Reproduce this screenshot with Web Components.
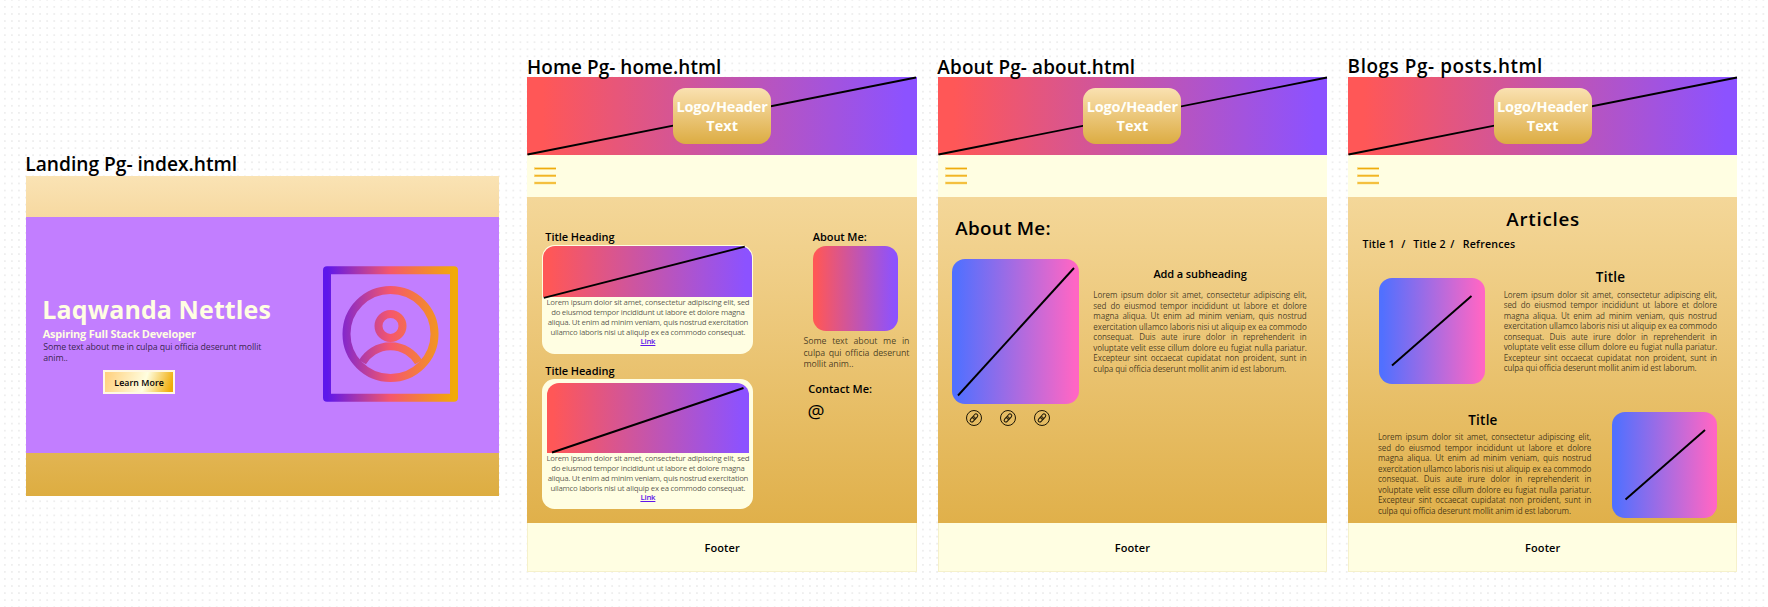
<!DOCTYPE html>
<html lang="en">
<head>
<meta charset="utf-8">
<title>Site wireframes</title>
<style>
html,body{margin:0;padding:0}
body{width:1768px;height:607px;overflow:hidden;background:#fff;font-family:"Open Sans","Noto Sans",sans-serif;color:#000}
</style>
</head>
<body>
<wire-canvas>
  <landing-board></landing-board>
  <page-board x="21.1" label="Home Pg- home.html" label-w="192" label-base="74.5" nav="6.6"><home-main></home-main></page-board>
  <page-board x="21.1" label="About Pg- about.html" label-w="195.5" label-base="74.5" nav="7"><about-main></about-main></page-board>
  <page-board x="0" label="Blogs Pg- posts.html" label-w="192.5" label-base="73" nav="9"><blog-main></blog-main></page-board>
</wire-canvas>
<script>
const LOREM = `Lorem ipsum dolor sit amet, consectetur adipiscing elit,
sed do eiusmod tempor incididunt ut labore et dolore
magna aliqua. Ut enim ad minim veniam, quis nostrud
exercitation ullamco laboris nisi ut aliquip ex ea commodo
consequat. Duis aute irure dolor in reprehenderit in
voluptate velit esse cillum dolore eu fugiat nulla pariatur.
Excepteur sint occaecat cupidatat non proident, sunt in
culpa qui officia deserunt mollit anim id est laborum.`;
const num = (el, name, dflt) => el.hasAttribute(name) ? parseFloat(el.getAttribute(name)) : dflt;

class Base extends HTMLElement {
  connectedCallback() {
    if (this.shadowRoot) return;
    const root = this.attachShadow({ mode: 'open' });
    root.innerHTML = this.render();
    if (this.ready) this.ready(root);
  }
}

/* One line of text, tracked so that its letters span the given width */
class TextLine extends Base {
  render() {
    const fs = num(this, 'fs', 11), lh = num(this, 'lh', 14), w = num(this, 'w', 50);
    return `<style>
      :host{display:block;flex:none;position:relative;z-index:1;width:${w}px;height:${lh}px;
        margin-top:${num(this, 'top', 0)}px;margin-left:${this.hasAttribute('center') ? 'auto' : num(this, 'left', 0) + 'px'};
        ${this.hasAttribute('center') ? 'margin-right:auto;' : ''}
        font-size:${fs}px;line-height:${lh + (fs > 12 ? 1 : 0)}px;font-weight:${this.getAttribute('wt') || 600}}
      span{display:inline-block;white-space:nowrap;margin-left:${-fs * .05}px}
    </style><span><slot></slot></span>`;
  }
  ready(root) {
    const s = root.querySelector('span'), fs = num(this, 'fs', 11);
    const n = this.textContent.length - 1;
    if (n > 0) s.style.letterSpacing = (num(this, 'w', 50) + fs * .12 - s.getBoundingClientRect().width) / n + 'px';
  }
}
customElements.define('text-line', TextLine);

/* Paragraph with fixed line breaks. widths: one ink width per line; justify keeps tracking and stretches spaces */
class TextBlock extends Base {
  render() {
    const fs = num(this, 'fs', 8), lh = num(this, 'lh', 10);
    const lines = this.textContent.trim().split('\n');
    return `<style>
      :host{display:block;flex:none;width:${num(this, 'w', 100)}px;margin-top:${num(this, 'top', 0)}px;
        font-size:${fs}px;line-height:${lh}px;color:var(--ink,rgba(0,0,0,.7))}
      div{height:${lh}px;display:flex;justify-content:${this.hasAttribute('center') ? 'center' : 'flex-start'}}
      span{white-space:nowrap;flex:none}
      .link{color:#5e17eb;text-decoration:underline;font-weight:600}
    </style>${lines.map(l => `<div><span${l === 'Link' ? ' class="link"' : ''}>${l}</span></div>`).join('')}`;
  }
  ready(root) {
    const spans = [...root.querySelectorAll('span')];
    const ws = this.getAttribute('widths').split(' ').map(Number);
    const width = s => s.getBoundingClientRect().width;
    if (this.hasAttribute('justify')) {
      const last = spans[spans.length - 1];
      const ls = (ws[1] - width(last)) / last.textContent.length;
      spans.forEach(s => s.style.letterSpacing = ls + 'px');
      spans.slice(0, -1).forEach(s => {
        s.style.wordSpacing = (ws[0] - width(s)) / (s.textContent.split(' ').length - 1) + 'px';
      });
    } else spans.forEach((s, i) => s.style.letterSpacing = (ws[i] - width(s)) / s.textContent.length + 'px');
  }
}
customElements.define('text-block', TextBlock);

/* Gradient picture placeholder with an optional diagonal stroke */
class PicBox extends Base {
  render() {
    const w = num(this, 'w'), h = num(this, 'h'), line = this.getAttribute('line');
    const cool = this.hasAttribute('cool');
    const p = line ? line.split(' ') : null;
    return `<style>
      :host{display:block;flex:none;width:${w}px;height:${h}px;margin:${num(this, 'top', 0)}px 0 0 ${num(this, 'left', 0)}px;
        border-radius:${this.getAttribute('radius') || '13px'};
        background:linear-gradient(90deg,${cool ? '#5170ff 3%,#ff66c4 97%' : '#ff5757 3%,#8c52ff 97%'})}
      svg{display:block;overflow:visible}
    </style>${p ? `<svg width="${w}" height="${h}"><line x1="${p[0]}" y1="${p[1]}" x2="${p[2]}" y2="${p[3]}" stroke="#000" stroke-width="1.9"/></svg>` : ''}`;
  }
}
customElements.define('pic-box', PicBox);

class WireCanvas extends Base {
  render() {
    return `<style>
      :host{display:flex;align-items:flex-start;box-sizing:border-box;width:1768px;height:607px;padding-left:25.5px;
        background:radial-gradient(circle at 50% 50%,#eeeeee .7px,rgba(238,238,238,0) 1.35px) 1.3px -3.7px/7.07px 7.07px #fff}
    </style><slot></slot>`;
  }
}
customElements.define('wire-canvas', WireCanvas);

class PersonIcon extends Base {
  render() {
    return `<style>:host{display:block;flex:none;width:135px;height:135.5px;margin-top:49px}svg{display:block}</style>
    <svg width="135" height="136" viewBox="0 0 135 135.5" fill="none" stroke="url(#g)" stroke-width="8">
      <defs><linearGradient id="g" gradientUnits="userSpaceOnUse" x1="0" y1="0" x2="135" y2="0">
        <stop offset=".03" stop-color="#5e17eb"/><stop offset=".5" stop-color="#f5576c"/><stop offset=".97" stop-color="#f2aa07"/></linearGradient></defs>
      <rect x="4" y="4" width="127" height="127.5" stroke-linejoin="round"/>
      <circle cx="67.5" cy="67.7" r="44"/><circle cx="67.5" cy="59.7" r="12"/>
      <path d="M39.5 96 A32.5 32.5 0 0 1 95.5 96"/>
    </svg>`;
  }
}
customElements.define('person-icon', PersonIcon);

class LandingBoard extends Base {
  render() {
    return `<style>
      :host{display:block;flex:none;width:473.5px;margin-right:28.4px}
      .board{margin-top:1px;height:319.5px;background:linear-gradient(#fae3b4,#f6d89f 14%,#e2b553 86%,#ddad41);display:flex;flex-direction:column}
      .hero{margin-top:41px;height:236px;background:#c27eff;display:flex}
      .copy{box-sizing:border-box;width:297.2px;padding-left:17.8px;color:#fffee2;--ink:rgba(0,0,0,.74)}
      .btn{box-sizing:border-box;margin:5.8px 0 0 59.5px;width:72.5px;height:24px;border:2px solid #fff8e4;color:#000;
        background:linear-gradient(108deg,#ffcf7c,#fffee0 58%,#f0ab05 96%);display:flex;align-items:center}
    </style>
    <text-line top="151" fs="19.2" lh="24" w="209.5" left=".8">Landing Pg- index.html</text-line>
    <div class="board"><div class="hero">
      <div class="copy">
        <text-line top="77.3" fs="25" lh="30" w="225.5" left=".3" wt="700">Laqwanda Nettles</text-line>
        <text-line top="2.4" fs="11" lh="14" w="152" wt="700">Aspiring Full Stack Developer</text-line>
        <text-block style="margin-top:1.8px" fs="8.8" lh="11" w="220" widths="218 24.5">Some text about me in culpa qui officia deserunt mollit
anim..</text-block>
        <div class="btn"><text-line center top="1" fs="8.8" lh="14" w="48.5">Learn More</text-line></div>
      </div>
      <person-icon></person-icon>
    </div></div>`;
  }
}
customElements.define('landing-board', LandingBoard);

class PageBoard extends Base {
  render() {
    const base = num(this, 'label-base');
    return `<style>
      :host{display:block;flex:none;width:389.2px;margin-right:${num(this, 'x')}px}
      header{position:relative;height:78.3px;margin-top:${77 - (base - 19.4) - 24}px;background:linear-gradient(90deg,#ff5757 4%,#8c52ff 97%)}
      header svg{position:absolute;inset:0;overflow:visible}
      .logo{position:relative;box-sizing:border-box;width:98px;height:56.3px;margin:0 auto;top:11px;padding-top:9px;border-radius:12.5px;
        background:linear-gradient(#fae1b1,#dcac42);color:#fffffa}
      nav{box-sizing:border-box;height:42.2px;background:#fffee2;display:flex;align-items:center;padding-left:${num(this, 'nav')}px}
      nav svg{display:block}
      main{height:325.5px;background:linear-gradient(#f4d799,#e0b04a);display:flow-root}
      footer{box-sizing:border-box;height:49.5px;background:#fffee2;border:solid #f6f1cb;border-width:0 1px 1px;display:flow-root}
    </style>
    <text-line top="${base - 19.4}" left=".6" fs="18.9" lh="24" w="${num(this, 'label-w')}">${this.getAttribute('label')}</text-line>
    <header>
      <svg width="389" height="78"><line x1=".5" y1="77.5" x2="389" y2=".5" stroke="#000" stroke-width="1.8"/></svg>
      <div class="logo">
        <text-line center fs="14.5" lh="19" w="89.5" wt="700">Logo/Header</text-line>
        <text-line center fs="14.5" lh="19" w="30" wt="700">Text</text-line>
      </div>
    </header>
    <nav><svg width="22" height="18"><g stroke="#f8d573" stroke-width="2.4"><path d="M0 1.5H22M0 8.8H22M0 16H22"/></g>
      <g stroke="#efab0c" stroke-width="1.1"><path d="M1 1.5H22M1 8.8H22M1 16H22"/></g></svg></nav>
    <main><slot></slot></main>
    <footer><text-line center top="17.7" fs="11" w="34">Footer</text-line></footer>`;
  }
}
customElements.define('page-board', PageBoard);

class PostCard extends Base {
  render() {
    return `<style>
      :host{display:block;width:211.5px;height:${num(this, 'h')}px;margin-top:1.5px;border-radius:12.5px;background:#fffee2;display:flow-root}
      text-block{margin:1.1px auto 0 4px;--ink:rgba(0,0,0,.68)}
    </style><slot></slot>
    <text-block center fs="7.8" lh="9.75" w="204" widths="203 193.5 200.5 195 15">Lorem ipsum dolor sit amet, consectetur adipiscing elit, sed
do eiusmod tempor incididunt ut labore et dolore magna
aliqua. Ut enim ad minim veniam, quis nostrud exercitation
ullamco laboris nisi ut aliquip ex ea commodo consequat.
Link</text-block>`;
  }
}
customElements.define('post-card', PostCard);

class HomeMain extends Base {
  render() {
    return `<style>
      :host{display:flex}
      .posts{width:261.5px;padding-left:14.5px}
      aside{width:106px}
    </style>
    <div class="posts">
      <text-line top="32.3" left="3.9" w="68">Title Heading</text-line>
      <post-card h="109" style="margin-top:1.1px"><pic-box top="1" left="1.2" w="209" h="51.3" radius="12px 12px 0 0" line=".8 51.8 201.8 .6"></pic-box></post-card>
      <text-line top="10.1" left="3.9" w="68">Title Heading</text-line>
      <post-card h="130" style="margin-top:1.1px"><pic-box top="4.1" left="5" w="202" h="70" radius="12px 12px 0 0" line="5 69.5 196.5 5"></pic-box></post-card>
    </div>
    <aside>
      <text-line top="32.3" left="10" w="52.5">About Me:</text-line>
      <pic-box top="2.2" left="9.5" w="85" h="85"></pic-box>
      <text-block justify top="5.2" fs="8.8" lh="11.4" w="106" widths="106 50">Some text about me in
culpa qui officia deserunt
mollit anim..</text-block>
      <text-line top="11.3" left="5.4" w="62.5">Contact Me:</text-line>
      <text-line top="5.6" left="5" fs="19" lh="20" w="17" wt="400">@</text-line>
    </aside>`;
  }
}
customElements.define('home-main', HomeMain);

class LinkBadge extends Base {
  render() {
    return `<style>:host{display:block;width:16px;height:16px}svg{display:block}</style>
    <svg width="16" height="16" viewBox="0 0 16 16" fill="none" stroke="#1c1606" stroke-width="1">
      <circle cx="8" cy="8" r="7.5"/>
      <g transform="rotate(-48 8 8)"><rect x="3.2" y="6.2" width="5.8" height="3.5" rx="1.75"/><rect x="7" y="6.2" width="5.8" height="3.5" rx="1.75"/></g>
    </svg>`;
  }
}
customElements.define('link-badge', LinkBadge);

class AboutMain extends Base {
  render() {
    return `<style>
      :host{display:flow-root}
      .row{display:flex;margin-top:19.4px;padding-left:14.2px}
      .left{width:141.5px}
      .right{width:213.3px;padding-top:8px}
      .links{display:flex;gap:18.2px;margin:5.2px 0 0 13.9px}
    </style>
    <text-line top="18.1" left="18.6" fs="18.8" lh="24" w="93">About Me:</text-line>
    <div class="row">
      <div class="left"><pic-box cool w="127" h="145.5" line="6 136.5 122 9"></pic-box>
        <div class="links"><link-badge></link-badge><link-badge></link-badge><link-badge></link-badge></div></div>
      <div class="right"><text-line center w="92">Add a subheading</text-line>
        <text-block justify top="9.1" fs="8.1" lh="10.5" w="213.3" widths="213.3 193">${LOREM}</text-block></div>
    </div>`;
  }
}
customElements.define('about-main', AboutMain);

class BlogMain extends Base {
  render() {
    return `<style>
      :host{display:flow-root}
      .crumbs{display:flex;margin:5.2px 0 0 15.1px}
      .row{display:flex}
      .copy{width:213.3px}
      .one{margin-top:18.4px;padding-left:31px}.one .copy{margin-left:19px}
      .two{margin-top:28.4px;padding-left:30px}
    </style>
    <text-line center top="10" fs="18.8" lh="24" w="70.5">Articles</text-line>
    <div class="crumbs"><text-line fs="10.6" w="30.8">Title 1</text-line><text-line fs="10.6" left="8" w="4">/</text-line>
      <text-line fs="10.6" left="8" w="31">Title 2</text-line><text-line fs="10.6" left="6" w="4">/</text-line><text-line fs="10.6" left="8.5" w="51">Refrences</text-line></div>
    <div class="row one"><pic-box cool top="8.9" w="105.7" h="105.7" line="13 87.5 92.5 18"></pic-box>
      <div class="copy"><text-line center fs="13.5" lh="16" w="27.5">Title</text-line>
      <text-block justify top="4.9" fs="8.1" lh="10.5" w="213.3" widths="213.3 193">${LOREM}</text-block></div></div>
    <div class="row two">
      <div class="copy"><text-line left="91" fs="13.5" lh="16" w="27.5">Title</text-line>
      <text-block justify top="4" fs="8.1" lh="10.5" w="213.3" widths="213.3 193">${LOREM}</text-block></div>
      <pic-box cool top=".4" left="20.5" w="105.7" h="105.7" line="13.5 87.5 93 18"></pic-box></div>`;
  }
}
customElements.define('blog-main', BlogMain);
</script>
</body>
</html>
